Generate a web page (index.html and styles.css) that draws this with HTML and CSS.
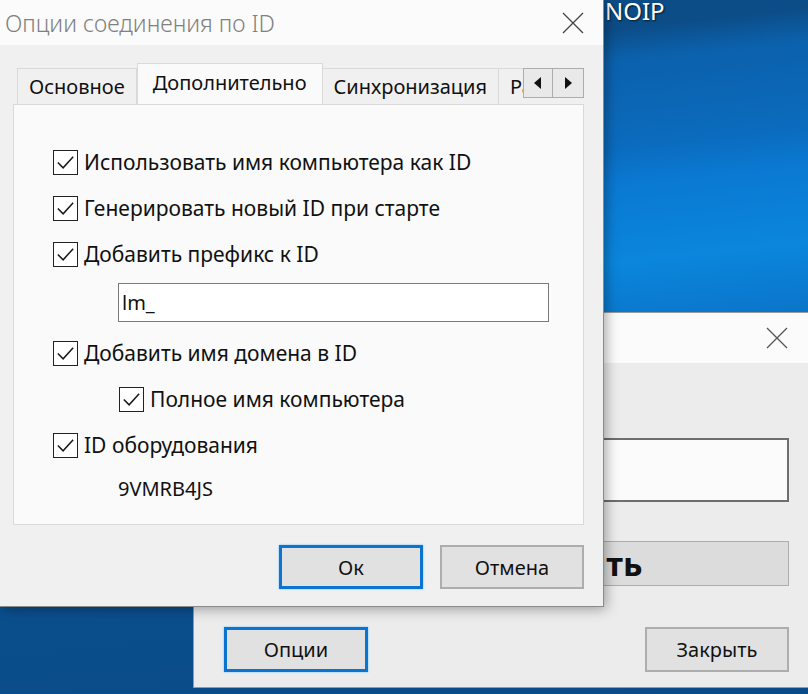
FILE: index.html
```html
<!DOCTYPE html>
<html lang="ru">
<head>
  <meta charset="UTF-8">
  <title>Опции соединения по ID</title>
  <link rel="stylesheet" href="styles.css">
</head>
<body>
  <div class="desktop">
    <div class="desk-label">NOIP</div>

    <!-- окно позади -->
    <div class="window back-window">
      <div class="titlebar">
        <span class="title"></span>
        <svg class="close" width="22" height="22" viewBox="0 0 22 22"><path d="M1 1 L21 21 M21 1 L1 21" stroke="#555" stroke-width="1.3" fill="none"/></svg>
      </div>
      <div class="back-body">
        <div class="id-field"></div>
        <button class="big-button">Присоединить</button>
        <div class="back-buttons">
          <button class="btn btn-default">Опции</button>
          <button class="btn">Закрыть</button>
        </div>
      </div>
    </div>

    <!-- диалог опций -->
    <div class="window front-window">
      <div class="titlebar">
        <span class="title">Опции соединения по ID</span>
        <svg class="close" width="22" height="22" viewBox="0 0 22 22"><path d="M1 1 L21 21 M21 1 L1 21" stroke="#444" stroke-width="1.3" fill="none"/></svg>
      </div>
      <div class="dialog-body">
        <div class="tab-strip">
          <div class="tabs">
            <div class="tab">Основное</div>
            <div class="tab active">Дополнительно</div>
            <div class="tab">Синхронизация</div>
            <div class="tab">Разное</div>
          </div>
          <div class="tab-scroll">
            <span class="arrow"><svg width="8" height="12" viewBox="0 0 8 12"><path d="M7 0 L0 6 L7 12 Z" fill="#111"/></svg></span>
            <span class="arrow"><svg width="8" height="12" viewBox="0 0 8 12"><path d="M1 0 L8 6 L1 12 Z" fill="#111"/></svg></span>
          </div>
        </div>
        <div class="panel">
          <label class="check-row">
            <span class="box"><svg viewBox="0 0 24 24"><path d="M4 12 L9.5 17.5 L20 6" stroke="#1a1a1a" stroke-width="1.6" fill="none"/></svg></span>
            Использовать имя компьютера как ID
          </label>
          <label class="check-row">
            <span class="box"><svg viewBox="0 0 24 24"><path d="M4 12 L9.5 17.5 L20 6" stroke="#1a1a1a" stroke-width="1.6" fill="none"/></svg></span>
            Генерировать новый ID при старте
          </label>
          <label class="check-row">
            <span class="box"><svg viewBox="0 0 24 24"><path d="M4 12 L9.5 17.5 L20 6" stroke="#1a1a1a" stroke-width="1.6" fill="none"/></svg></span>
            Добавить префикс к ID
          </label>
          <div class="prefix-input">lm_</div>
          <label class="check-row">
            <span class="box"><svg viewBox="0 0 24 24"><path d="M4 12 L9.5 17.5 L20 6" stroke="#1a1a1a" stroke-width="1.6" fill="none"/></svg></span>
            Добавить имя домена в ID
          </label>
          <label class="check-row nested">
            <span class="box"><svg viewBox="0 0 24 24"><path d="M4 12 L9.5 17.5 L20 6" stroke="#1a1a1a" stroke-width="1.6" fill="none"/></svg></span>
            Полное имя компьютера
          </label>
          <label class="check-row">
            <span class="box"><svg viewBox="0 0 24 24"><path d="M4 12 L9.5 17.5 L20 6" stroke="#1a1a1a" stroke-width="1.6" fill="none"/></svg></span>
            ID оборудования
          </label>
          <div class="hw-id">9VMRB4JS</div>
        </div>
        <div class="dialog-buttons">
          <button class="btn btn-default">Ок</button>
          <button class="btn">Отмена</button>
        </div>
      </div>
    </div>
  </div>
</body>
</html>
```

FILE: styles.css
```css
body {
  margin: 0;
  padding: 0;
  font-family: "Noto Sans", "Open Sans", sans-serif;
  color: #111;
  overflow: hidden;
}
.desktop {
  position: relative;
  width: 808px;
  height: 694px;
  overflow: hidden;
  background: linear-gradient(174deg, #0c4a82 0%, #0c4d88 12%, #0b61ac 16%, #0b6bbd 27%, #0a79d2 32%, #0a86dc 42%, #0a6cbf 56%, #0a508e 74%, #0a4a88 100%);
}
.desk-label {
  position: absolute;
  left: 605px;
  top: -6px;
  color: #fff;
  font-size: 24px;
  text-shadow: 1px 1px 2px rgba(0,0,0,0.7);
}
.window {
  position: absolute;
  background: #f0f0f0;
  box-sizing: border-box;
}
.titlebar {
  display: flex;
  align-items: center;
  justify-content: space-between;
  background: #fbfbfb;
}
.title {
  color: #808080;
  font-size: 23px;
  font-weight: 300;
}
.close {
  flex: none;
}

/* окно позади */
.back-window {
  left: 193px;
  top: 312px;
  width: 616px;
  height: 376px;
  border: 1px solid #9a9a9a;
  background: #ececec;
}
.back-window .titlebar {
  height: 50px;
  padding: 0 20px 0 10px;
}
.back-body {
  padding: 75px 19px 17px 30px;
}
.id-field {
  height: 64px;
  background: #fbfbfb;
  border: 2px solid #6e6e6e;
  box-sizing: border-box;
}
.big-button {
  display: block;
  width: 100%;
  height: 45px;
  margin-top: 39px;
  padding: 0 0 0 24px;
  background: #dcdcdc;
  border: 1px solid #adadad;
  font-family: inherit;
  font-size: 33px;
  font-weight: bold;
  line-height: 1;
  color: #111;
}
.back-buttons {
  display: flex;
  justify-content: space-between;
  margin-top: 41px;
}

/* кнопки */
.btn {
  width: 144px;
  height: 45px;
  background: #e1e1e1;
  border: 2px solid #adadad;
  font-family: inherit;
  font-size: 20px;
  color: #111;
  padding: 0;
}
.btn-default {
  border: 3px solid #0a74d0;
  box-shadow: 0 0 2px #6cc0ff;
}

/* диалог опций */
.front-window {
  left: 0;
  top: 0;
  width: 604px;
  height: 607px;
  border-right: 1px solid #8a8a8a;
  border-bottom: 1px solid #8a8a8a;
  box-shadow: 2px 2px 12px rgba(0,0,0,0.35);
}
.front-window .titlebar {
  height: 45px;
  padding: 0 19px 0 5px;
}
.dialog-body {
  padding: 18px 19px 17px 13px;
}
.tab-strip {
  display: flex;
  align-items: flex-end;
  height: 41px;
}
.tabs {
  display: flex;
  align-items: flex-end;
  width: 512px;
  overflow: hidden;
  padding-left: 4px;
  box-sizing: border-box;
}
.tab {
  flex: none;
  height: 36px;
  line-height: 36px;
  padding: 0 11px;
  font-size: 20px;
  background: #f0f0f0;
  border: 1px solid #d9d9d9;
  border-bottom: none;
  box-sizing: border-box;
  white-space: nowrap;
}
.tab + .tab {
  border-left: none;
}
.tab.active {
  height: 42px;
  line-height: 38px;
  padding: 0 15px;
  background: #fafafa;
  margin-bottom: -1px;
  position: relative;
  border-left: 1px solid #d9d9d9;
}
.tab-scroll {
  display: flex;
  margin-bottom: 6px;
}
.arrow {
  display: flex;
  align-items: center;
  justify-content: center;
  width: 30px;
  height: 30px;
  background: #e9e9e9;
  border: 1px solid #adadad;
  box-sizing: border-box;
}
.arrow + .arrow {
  border-left: none;
  width: 31px;
}
.panel {
  height: 421px;
  background: #fafafa;
  border: 1px solid #d9d9d9;
  box-sizing: border-box;
  padding: 34px 0 0 39px;
}
.check-row {
  display: flex;
  align-items: center;
  gap: 6px;
  height: 46px;
  font-size: 21px;
}
.check-row.nested {
  padding-left: 66px;
}
.box {
  flex: none;
  width: 25px;
  height: 25px;
  border: 1.5px solid #222;
  box-sizing: border-box;
  background: #fff;
  display: flex;
}
.box svg {
  width: 100%;
  height: 100%;
}
.prefix-input {
  margin: 6px 0 8px 65px;
  width: 431px;
  height: 39px;
  line-height: 37px;
  padding-left: 3px;
  border: 1px solid #7a7a7a;
  background: #fff;
  box-sizing: border-box;
  font-size: 20px;
}
.hw-id {
  margin-left: 65px;
  height: 42px;
  line-height: 42px;
  font-size: 20px;
}
.dialog-buttons {
  display: flex;
  justify-content: flex-end;
  gap: 17px;
  margin-top: 20px;
}
.dialog-buttons .btn {
  height: 44px;
}
```
